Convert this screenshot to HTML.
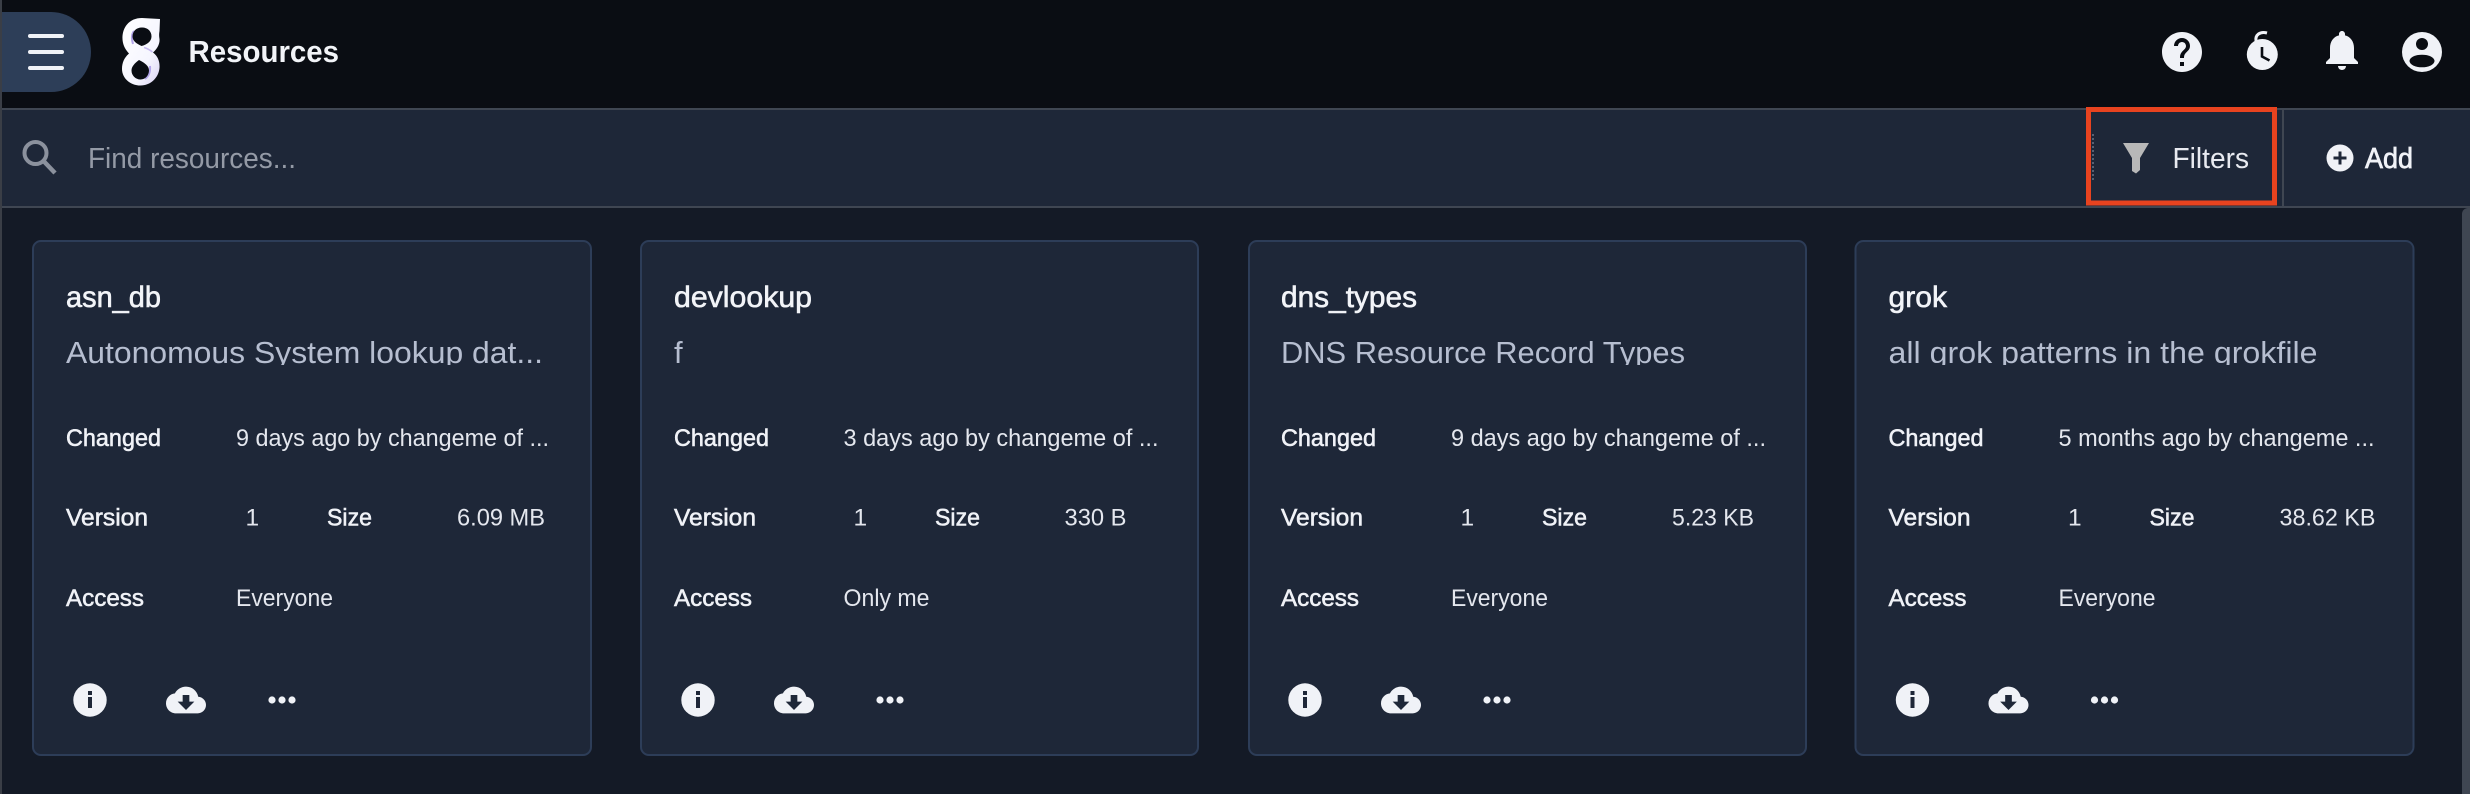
<!DOCTYPE html>
<html lang="en">
<head>
<meta charset="utf-8">
<title>Resources</title>
<style>
html,body{margin:0;padding:0;width:2470px;height:794px;overflow:hidden;background:#141a26}
svg{display:block}
text{font-family:"Liberation Sans",sans-serif;white-space:pre}
.name{font-size:30px;fill:#f2f4f8;stroke:#f2f4f8;stroke-width:.6px}
.desc{font-size:31px;fill:#b6bed0}
.lab{font-size:24.5px;fill:#f0f2f7;stroke:#f0f2f7;stroke-width:.55px}
.val{font-size:24.5px;fill:#e4e7ee}
</style>
</head>
<body>
<svg xmlns="http://www.w3.org/2000/svg" width="2470" height="794" viewBox="0 0 2470 794">
<defs>
<clipPath id="dc"><rect x="0" y="325" width="559" height="40"/></clipPath>
<linearGradient id="lg" x1="0" y1="0" x2="1" y2="1"><stop offset="0" stop-color="#ffffff"/><stop offset=".65" stop-color="#f6f6ff"/><stop offset="1" stop-color="#d9d2f4"/></linearGradient>
<g id="acts" fill="#f0f2f7">
  <circle cx="58" cy="700" r="16.7"/>
  <rect x="56" y="691" width="4" height="4" fill="#1e2738"/>
  <rect x="56" y="697" width="4" height="11" fill="#1e2738"/>
  <path transform="translate(134 680) scale(1.667)" fill-rule="evenodd" d="M19.35 10.04C18.67 6.59 15.64 4 12 4 9.11 4 6.6 5.64 5.35 8.04 2.34 8.36 0 10.91 0 14c0 3.31 2.69 6 6 6h13c2.76 0 5-2.24 5-5 0-2.64-2.05-4.78-4.65-4.96zM17 13l-5 5-5-5h3V9h4v4h3z"/>
  <circle cx="240" cy="700" r="3.6"/><circle cx="250" cy="700" r="3.6"/><circle cx="260" cy="700" r="3.6"/>
</g>
</defs>

<rect width="2470" height="794" fill="#141a26"/>
<rect width="2470" height="108" fill="#0a0d13"/>
<rect y="108" width="2470" height="100" fill="#1e2738"/>
<rect y="108" width="2470" height="2" fill="#3f4652"/>
<rect y="206" width="2470" height="2" fill="#3f4652"/>
<rect width="2" height="794" fill="#3a3e46"/>

<!-- menu -->
<path d="M2 12H51A40 40 0 0 1 51 92H2Z" fill="#2d3e58"/>
<g fill="#f0f2f7"><rect x="28" y="34" width="36" height="4" rx="2"/><rect x="28" y="50" width="36" height="4" rx="2"/><rect x="28" y="66" width="36" height="4" rx="2"/></g>

<!-- logo -->
<path fill="url(#lg)" d="M160 19L159.500 31C159 34 159 36 159.500 39C160 44 157 49 153 52.500C157.500 56 160 61 159.500 68C158.500 78 150.500 85.500 140.500 85.500C130 85.500 122 78 122 69C122 62 125 57 129 53.500C125 49 122 44 122.500 36C123.500 25 131 18 142 18Z"/>
<path d="M133 44C131.500 39 131.500 34 134 31" fill="none" stroke="#b3a5ea" stroke-width="2"/>
<path d="M150 66C150.500 71 149 76 145 79" fill="none" stroke="#b3a5ea" stroke-width="2"/>
<path d="M144 47.500C147.500 48.500 150 50 152.500 52" fill="none" stroke="#c6baf0" stroke-width="1.500"/>
<path fill="#0a0d13" d="M142 27.500C136 27.500 132.500 31.500 132.500 36.500C132.500 40.500 136 43.500 141.500 46C147.500 44.500 151.500 41 151.500 36.500C151.500 31.500 148 27.500 142 27.500Z"/>
<path fill="#0a0d13" d="M139 60C134.500 63.500 131.500 66.500 131.500 70.500C131.500 75.500 135.500 79.500 140.500 79.500C145.500 79.500 149 75 149 70.500C149 66 145 63 139 60Z"/>

<text x="188.500" y="62" font-size="31" font-weight="700" fill="#f2f4f8" textLength="150.500" lengthAdjust="spacingAndGlyphs">Resources</text>

<!-- top right icons -->
<g fill="#f0f2f7">
  <path transform="translate(2158 28) scale(2)" d="M12 2C6.48 2 2 6.48 2 12s4.48 10 10 10 10-4.48 10-10S17.52 2 12 2zm1 17h-2v-2h2v2zm2.070-7.750l-.9.920C13.450 12.900 13 13.500 13 15h-2v-.5c0-1.100.45-2.100 1.170-2.830l1.240-1.260c.37-.36.59-.86.59-1.410 0-1.100-.9-2-2-2s-2 .9-2 2H8c0-2.210 1.790-4 4-4s4 1.790 4 4c0 .88-.36 1.680-.93 2.250z"/>
  <circle cx="2262.300" cy="54.500" r="15.500"/>
  <path transform="translate(2318 26) scale(2)" d="M12 22c1.100 0 2-.9 2-2h-4c0 1.100.89 2 2 2zm6-6v-5c0-3.070-1.640-5.640-4.500-6.320V4c0-.83-.67-1.500-1.500-1.500s-1.500.67-1.500 1.500v.68C7.630 5.360 6 7.920 6 11v5l-2 2v1h16v-1l-2-2z"/>
  <circle cx="2422" cy="52" r="20"/>
</g>
<path d="M2256 41C2255 35 2260 31 2267 33" fill="none" stroke="#f0f2f7" stroke-width="3"/>
<path d="M2262 47V56.500L2269.500 60.500" fill="none" stroke="#0a0d13" stroke-width="2.600"/>
<circle cx="2422" cy="44" r="6" fill="#0a0d13"/>
<ellipse cx="2422" cy="61" rx="12.500" ry="6.300" fill="#0a0d13"/>

<!-- search -->
<circle cx="35.500" cy="153" r="11" fill="none" stroke="#8b919d" stroke-width="4"/>
<path d="M44 161.500L55 173" stroke="#8b919d" stroke-width="4.500" fill="none"/>
<text x="88" y="168" font-size="28.500" fill="#949aa6" textLength="208" lengthAdjust="spacingAndGlyphs">Find resources...</text>

<!-- filters -->
<line x1="2093" y1="134" x2="2093" y2="182" stroke="#596172" stroke-width="2" stroke-dasharray="2 2"/>
<path d="M2123 143H2149L2140 158V170L2136 173.500L2132 171V158Z" fill="#b8b8b8"/>
<text x="2172.500" y="168" font-size="28.500" fill="#e8eaf0" textLength="76.500" lengthAdjust="spacingAndGlyphs">Filters</text>
<rect x="2088.500" y="109.500" width="186" height="93.500" fill="none" stroke="#e8431f" stroke-width="5"/>
<rect x="2282" y="110" width="2" height="96" fill="#3f4652"/>
<circle cx="2340" cy="158" r="13.500" fill="#f0f2f7"/>
<path d="M2340 151.500V164.500M2333.500 158H2346.500" stroke="#1e2738" stroke-width="3"/>
<text x="2365" y="168" font-size="28.500" fill="#f0f2f7" stroke="#f0f2f7" stroke-width=".7" textLength="48" lengthAdjust="spacingAndGlyphs">Add</text>

<!-- scrollbar -->
<path d="M2470 208H2468A6 6 0 0 0 2462 214V794H2470Z" fill="#3f4652"/>

<!-- card 1 -->
<g transform="translate(32 0)">
  <rect x="1" y="241" width="558" height="514" rx="8" fill="#1e2738" stroke="#2d3d58" stroke-width="2"/>
  <text class="name" x="34" y="307" textLength="95" lengthAdjust="spacingAndGlyphs">asn_db</text>
  <g clip-path="url(#dc)"><text class="desc" x="34" y="363" textLength="477" lengthAdjust="spacingAndGlyphs">Autonomous System lookup dat...</text></g>
  <text class="lab" x="34" y="446" textLength="95" lengthAdjust="spacingAndGlyphs">Changed</text>
  <text class="val" x="204" y="446" textLength="313" lengthAdjust="spacingAndGlyphs">9 days ago by changeme of ...</text>
  <text class="lab" x="34" y="525.500" textLength="82" lengthAdjust="spacingAndGlyphs">Version</text>
  <text class="val" x="213.500" y="525.500">1</text>
  <text class="lab" x="295" y="525.500" textLength="45" lengthAdjust="spacingAndGlyphs">Size</text>
  <text class="val" x="425" y="525.500" textLength="88" lengthAdjust="spacingAndGlyphs">6.09 MB</text>
  <text class="lab" x="34" y="606" textLength="78" lengthAdjust="spacingAndGlyphs">Access</text>
  <text class="val" x="204" y="606" textLength="97" lengthAdjust="spacingAndGlyphs">Everyone</text>
  <use href="#acts"/>
</g>

<!-- card 2 -->
<g transform="translate(640 0)">
  <rect x="1" y="241" width="557" height="514" rx="8" fill="#1e2738" stroke="#2d3d58" stroke-width="2"/>
  <text class="name" x="34" y="307" textLength="138" lengthAdjust="spacingAndGlyphs">devlookup</text>
  <g clip-path="url(#dc)"><text class="desc" x="34" y="363">f</text></g>
  <text class="lab" x="34" y="446" textLength="95" lengthAdjust="spacingAndGlyphs">Changed</text>
  <text class="val" x="203.500" y="446" textLength="315" lengthAdjust="spacingAndGlyphs">3 days ago by changeme of ...</text>
  <text class="lab" x="34" y="525.500" textLength="82" lengthAdjust="spacingAndGlyphs">Version</text>
  <text class="val" x="213.500" y="525.500">1</text>
  <text class="lab" x="295" y="525.500" textLength="45" lengthAdjust="spacingAndGlyphs">Size</text>
  <text class="val" x="424.500" y="525.500" textLength="62" lengthAdjust="spacingAndGlyphs">330 B</text>
  <text class="lab" x="34" y="606" textLength="78" lengthAdjust="spacingAndGlyphs">Access</text>
  <text class="val" x="203.500" y="606" textLength="86" lengthAdjust="spacingAndGlyphs">Only me</text>
  <use href="#acts"/>
</g>

<!-- card 3 -->
<g transform="translate(1247 0)">
  <rect x="2" y="241" width="557" height="514" rx="8" fill="#1e2738" stroke="#2d3d58" stroke-width="2"/>
  <text class="name" x="34" y="307" textLength="136" lengthAdjust="spacingAndGlyphs">dns_types</text>
  <g clip-path="url(#dc)"><text class="desc" x="34" y="363" textLength="404" lengthAdjust="spacingAndGlyphs">DNS Resource Record Types</text></g>
  <text class="lab" x="34" y="446" textLength="95" lengthAdjust="spacingAndGlyphs">Changed</text>
  <text class="val" x="204" y="446" textLength="315" lengthAdjust="spacingAndGlyphs">9 days ago by changeme of ...</text>
  <text class="lab" x="34" y="525.500" textLength="82" lengthAdjust="spacingAndGlyphs">Version</text>
  <text class="val" x="213.500" y="525.500">1</text>
  <text class="lab" x="295" y="525.500" textLength="45" lengthAdjust="spacingAndGlyphs">Size</text>
  <text class="val" x="425" y="525.500" textLength="82" lengthAdjust="spacingAndGlyphs">5.23 KB</text>
  <text class="lab" x="34" y="606" textLength="78" lengthAdjust="spacingAndGlyphs">Access</text>
  <text class="val" x="204" y="606" textLength="97" lengthAdjust="spacingAndGlyphs">Everyone</text>
  <use href="#acts"/>
</g>

<!-- card 4 -->
<g transform="translate(1854.500 0)">
  <rect x="1" y="241" width="558" height="514" rx="8" fill="#1e2738" stroke="#2d3d58" stroke-width="2"/>
  <text class="name" x="34" y="307" textLength="58.500" lengthAdjust="spacingAndGlyphs">grok</text>
  <g clip-path="url(#dc)"><text class="desc" x="34" y="363" textLength="429" lengthAdjust="spacingAndGlyphs">all grok patterns in the grokfile</text></g>
  <text class="lab" x="34" y="446" textLength="95" lengthAdjust="spacingAndGlyphs">Changed</text>
  <text class="val" x="204" y="446" textLength="316" lengthAdjust="spacingAndGlyphs">5 months ago by changeme ...</text>
  <text class="lab" x="34" y="525.500" textLength="82" lengthAdjust="spacingAndGlyphs">Version</text>
  <text class="val" x="213.500" y="525.500">1</text>
  <text class="lab" x="295" y="525.500" textLength="45" lengthAdjust="spacingAndGlyphs">Size</text>
  <text class="val" x="425" y="525.500" textLength="96" lengthAdjust="spacingAndGlyphs">38.62 KB</text>
  <text class="lab" x="34" y="606" textLength="78" lengthAdjust="spacingAndGlyphs">Access</text>
  <text class="val" x="204" y="606" textLength="97" lengthAdjust="spacingAndGlyphs">Everyone</text>
  <use href="#acts"/>
</g>
</svg>
</body>
</html>
